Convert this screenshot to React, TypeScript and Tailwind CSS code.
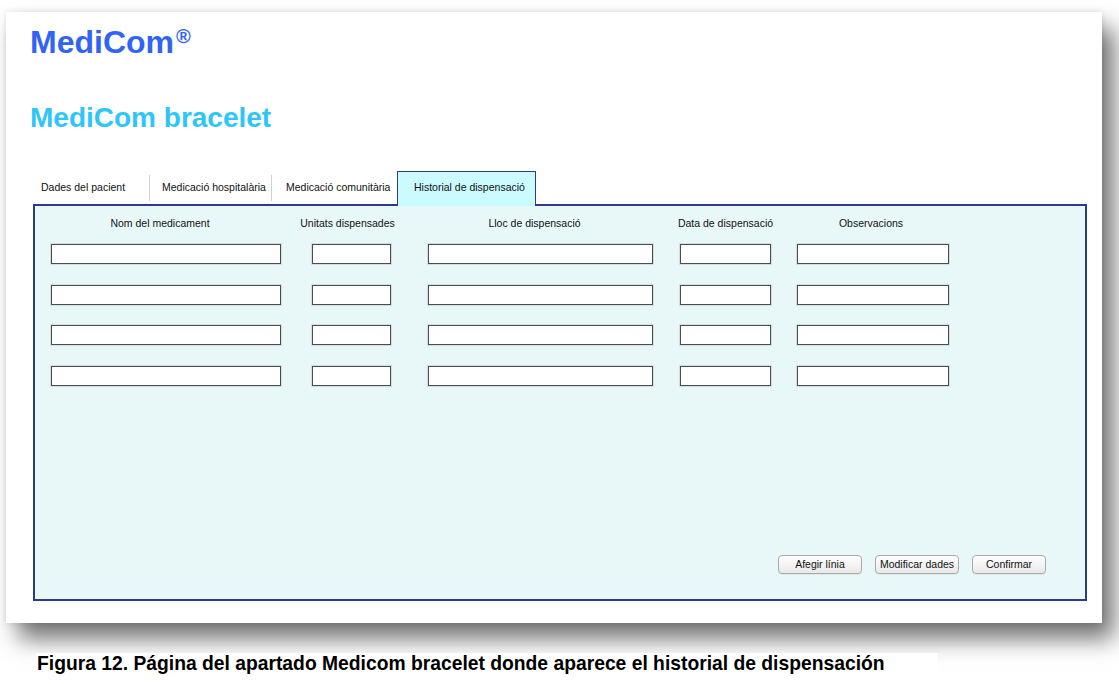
import React from "react";

const cols = [
  { w: "w-[230px]", ml: "ml-[16px]", head: "Nom del medicament", hp: "pr-[12px]" },
  { w: "w-[79px]", ml: "ml-[31px]", head: "Unitats dispensades", hp: "pr-[8px]" },
  { w: "w-[225px]", ml: "ml-[37px]", head: "Lloc de dispensació", hp: "pr-[12px]" },
  { w: "w-[91px]", ml: "ml-[27px]", head: "Data de dispensació", hp: "" },
  { w: "w-[152px]", ml: "ml-[26px]", head: "Observacions", hp: "pr-[4px]" },
];

const rows = [0, 1, 2, 3];

function Tab({
  label,
  className,
}: {
  label: string;
  className: string;
}) {
  return (
    <div className={`h-[33px] flex items-center text-[10.5px] text-[#111] whitespace-nowrap ${className}`}>
      {label}
    </div>
  );
}

function Sep() {
  return <div className="w-px h-[26px] bg-[#d2d2d2] self-center" />;
}

function Btn({ label, w }: { label: string; w: string }) {
  return (
    <button
      className={`${w} h-[19px] rounded-[4px] border border-[#a9a9a9] bg-gradient-to-b from-white to-[#e9e9e9] text-[10.5px] text-[#111] leading-none shadow-[0_1px_0_rgba(0,0,0,0.06)]`}
    >
      {label}
    </button>
  );
}

export default function App() {
  return (
    <div
      className="w-[1119px] h-[684px] overflow-hidden bg-white"
      style={{ fontFamily: '"Liberation Sans", Arial, sans-serif' }}
    >
      <div className="ml-[6px] mt-[12px] w-[1096px] h-[611px] bg-white pl-[24px] flex flex-col shadow-[12px_16px_22px_rgba(0,0,0,0.55),0_0_6px_rgba(0,0,0,0.12)]">
        <div className="pt-[14px] text-[32px] leading-[32px] font-bold text-[#3163f6] whitespace-nowrap">
          MediCom
          <span className="align-top text-[20px] leading-[20px] ml-[2px]">®</span>
        </div>
        <div className="mt-[46px] text-[28px] leading-[28px] font-bold text-[#2ec6fa] whitespace-nowrap">
          MediCom bracelet
        </div>

        <div className="ml-[3px] mt-[39px] flex items-start">
          <Tab label="Dades del pacient" className="w-[116px] pl-[8px]" />
          <Sep />
          <Tab label="Medicació hospitalària" className="w-[121px] pl-[12px]" />
          <Sep />
          <Tab label="Medicació comunitària" className="w-[125px] pl-[14px]" />
          <div className="relative z-10 w-[139px] h-[35px] -mb-[2px] border-[1.5px] border-b-0 border-[#2d3a8e] bg-[#ccfbff] pl-[16px] flex items-center pb-[2px] text-[10.5px] text-[#111] whitespace-nowrap">
            Historial de dispensació
          </div>
        </div>

        <div className="ml-[3px] w-[1054px] h-[397px] border-2 border-[#2d3a8e] bg-[#e8f8f9] flex flex-col">
          <div className="pt-[10px] flex">
            {cols.map((c) => (
              <div
                key={c.head}
                className={`${c.w} ${c.ml} ${c.hp} flex justify-center text-[10.5px] leading-[14px] text-[#111] whitespace-nowrap`}
              >
                {c.head}
              </div>
            ))}
          </div>

          <div className="mt-[14px] flex flex-col gap-[20.5px]">
            {rows.map((r) => (
              <div key={r} className="flex">
                {cols.map((c) => (
                  <div
                    key={c.head}
                    className={`${c.w} ${c.ml} h-[20px] bg-white border border-[#4d4d4d] shadow-[0_0_0_1px_rgba(0,0,0,0.1)]`}
                  />
                ))}
              </div>
            ))}
          </div>

          <div className="mt-auto pb-[25px] pr-[39px] flex justify-end gap-[13px]">
            <Btn label="Afegir línia" w="w-[84px]" />
            <Btn label="Modificar dades" w="w-[84px]" />
            <Btn label="Confirmar" w="w-[74px]" />
          </div>
        </div>
      </div>

      <div className="relative z-10 mt-[30px] ml-[36px] w-[902px] h-[31px] bg-white pl-[1px] text-[19.3px] leading-[21px] font-bold text-black whitespace-nowrap">
        Figura 12. Página del apartado Medicom bracelet donde aparece el historial de dispensación
      </div>
    </div>
  );
}
